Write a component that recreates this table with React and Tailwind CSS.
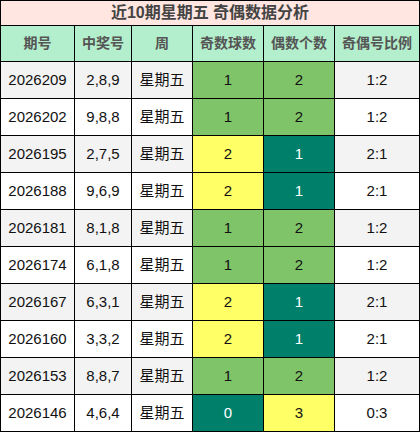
import React from "react";

const rows = [
  ["2026209", "2,8,9", 1, 2, "1:2"],
  ["2026202", "9,8,8", 1, 2, "1:2"],
  ["2026195", "2,7,5", 2, 1, "2:1"],
  ["2026188", "9,6,9", 2, 1, "2:1"],
  ["2026181", "8,1,8", 1, 2, "1:2"],
  ["2026174", "6,1,8", 1, 2, "1:2"],
  ["2026167", "6,3,1", 2, 1, "2:1"],
  ["2026160", "3,3,2", 2, 1, "2:1"],
  ["2026153", "8,8,7", 1, 2, "1:2"],
  ["2026146", "4,6,4", 0, 3, "0:3"],
];

function colorFor(v) {
  if (v === 1) return "bg-[#80c469] text-[#111]";
  if (v === 2) return "bg-[#ffff66] text-[#111]";
  if (v === 0) return "bg-[#00806a] text-white";
  if (v === 3) return "bg-[#ffff66] text-[#111]";
  return "";
}
function colorFor2(v) {
  if (v === 2) return "bg-[#80c469] text-[#111]";
  if (v === 1) return "bg-[#00806a] text-white";
  if (v === 3) return "bg-[#ffff66] text-[#111]";
  return "";
}

const cols = "grid grid-cols-[74px_57px_61px_71px_71px_85px]";
const cell = "flex items-center justify-center border-r border-b border-black";

export default function App() {
  const headers = ["期号", "中奖号", "周", "奇数球数", "偶数个数", "奇偶号比例"];
  return (
    <div
      className="w-[420px] border-t border-l border-black bg-white"
      style={{ fontFamily: '"Liberation Sans", "Noto Sans CJK SC", sans-serif' }}
    >
      <div className="h-[25px] border-r border-b border-black bg-[#ffe6e0] flex items-center justify-center text-[16px] font-bold text-[#444]">
        近10期星期五 奇偶数据分析
      </div>
      <div className={cols}>
        {headers.map((h) => (
          <div key={h} className={`${cell} h-[36px] bg-[#b3efcc] text-[14px] font-bold text-[#555]`}>
            {h}
          </div>
        ))}
      </div>
      {rows.map((r, i) => {
        const bg = i % 2 === 0 ? "bg-[#f3f3f3]" : "bg-white";
        return (
          <div key={r[0]} className={`${cols} text-[15px] text-[#111]`}>
            <div className={`${cell} h-[37px] ${bg}`}>{r[0]}</div>
            <div className={`${cell} h-[37px] ${bg}`}>{r[1]}</div>
            <div className={`${cell} h-[37px] ${bg}`}>星期五</div>
            <div className={`${cell} h-[37px] ${colorFor(r[2])}`}>{r[2]}</div>
            <div className={`${cell} h-[37px] ${colorFor2(r[3])}`}>{r[3]}</div>
            <div className={`${cell} h-[37px] ${bg}`}>{r[4]}</div>
          </div>
        );
      })}
    </div>
  );
}
